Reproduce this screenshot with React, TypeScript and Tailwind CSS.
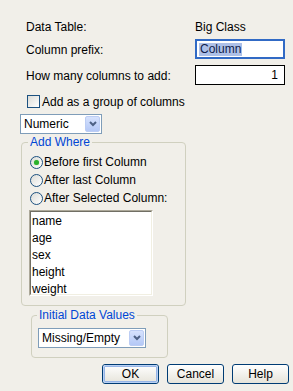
import React from "react";

function Chevron() {
  return (
    <svg width="8" height="6" viewBox="0 0 8 6">
      <path d="M1 1 L4 4 L7 1" fill="none" stroke="#4d6185" strokeWidth="2" />
    </svg>
  );
}

function Dropdown({ label, w }: { label: string; w: string }) {
  return (
    <div className={`${w} h-[20px] bg-white border border-[#7f9db9] flex items-center justify-between pl-[3px] pr-px`}>
      <span className="leading-[14px]">{label}</span>
      <div className="w-[15px] h-[16px] rounded-[2px] bg-gradient-to-b from-[#d6e2fd] to-[#b4c8f6] border border-[#bccdf4] flex items-center justify-center">
        <Chevron />
      </div>
    </div>
  );
}

function Radio({ checked, label }: { checked?: boolean; label: string }) {
  return (
    <div className="flex items-center h-[18px]">
      <div className="w-[13px] h-[13px] rounded-full border border-[#1c5180] bg-gradient-to-br from-[#dcdcd7] to-white flex items-center justify-center">
        {checked && <div className="w-[5px] h-[5px] rounded-full bg-[#2bb12b] shadow-[0_0_1px_#6fd66f]" />}
      </div>
      <span className="ml-px leading-[14px]">{label}</span>
    </div>
  );
}

function Btn({ label, def }: { label: string; def?: boolean }) {
  return (
    <div className="w-[57px] h-[20px] rounded-[3px] border border-[#003c74] bg-gradient-to-b from-white to-[#e6e4da] flex items-center justify-center">
      <div className={`w-full h-full rounded-[2px] flex items-center justify-center ${def ? "border border-[#b8d0f3] shadow-[inset_0_0_0_1px_#96b4e6]" : ""}`}>
        <span className="leading-[14px]">{label}</span>
      </div>
    </div>
  );
}

export default function App() {
  return (
    <div
      className="w-[293px] h-[391px] bg-[#f1efe9] text-black text-[12px] overflow-hidden"
      style={{ fontFamily: '"Liberation Sans", Arial, sans-serif' }}
    >
      <div className="pt-[20px] pl-[26px] flex leading-[14px]">
        <span className="w-[169px]">Data Table:</span>
        <span>Big Class</span>
      </div>
      <div className="mt-[5px] pl-[26px] flex items-center">
        <span className="w-[169px] leading-[14px] pt-[2px]">Column prefix:</span>
        <div className="w-[90px] h-[20px] border-2 border-[#316ac5] bg-white flex items-center pl-[2px]">
          <span className="bg-[#adc0e8] leading-[13px] px-px text-[#10204a]">Column</span>
        </div>
      </div>
      <div className="mt-[6px] pl-[26px] flex items-center">
        <span className="w-[169px] leading-[14px] pt-[2px]">How many columns to add:</span>
        <div className="w-[90px] h-[20px] border border-black bg-white flex items-center justify-end pr-[6px]">
          <span className="leading-[14px]">1</span>
        </div>
      </div>
      <div className="mt-[9px] pl-[27px] flex items-center">
        <div className="w-[13px] h-[13px] border border-[#1c5180] bg-gradient-to-br from-[#dcdcd7] to-white" />
        <span className="ml-[2px] leading-[14px] pt-[1px]">Add as a group of columns</span>
      </div>
      <div className="mt-[5px] pl-[20px]">
        <Dropdown label="Numeric" w="w-[82px]" />
      </div>
      <div className="mt-[8px] ml-[21px] w-[165px] h-[164px] border border-[#d0d0bf] rounded-[4px] relative">
        <span className="absolute -top-[8px] left-[6px] px-[2px] bg-[#f1efe9] text-[#0046d5] leading-[14px]">Add Where</span>
        <div className="pt-[10px] pl-[8px]">
          <Radio checked label="Before first Column" />
          <Radio label="After last Column" />
          <Radio label="After Selected Column:" />
          <div className="mt-[3px] -ml-px w-[124px] h-[86px] border border-t-[#aca899] border-l-[#aca899] border-r-white border-b-white">
            <div className="w-full h-full border border-t-[#716f64] border-l-[#716f64] border-r-[#f1efe2] border-b-[#f1efe2] bg-white pl-px leading-[17px] pt-[1px]">
              <div>name</div>
              <div>age</div>
              <div>sex</div>
              <div>height</div>
              <div>weight</div>
            </div>
          </div>
        </div>
      </div>
      <div className="mt-[9px] ml-[31px] w-[137px] h-[43px] border border-[#d0d0bf] rounded-[4px] relative">
        <span className="absolute -top-[8px] left-[5px] px-[2px] bg-[#f1efe9] text-[#0046d5] leading-[14px]">Initial Data Values</span>
        <div className="pt-[12px] pl-[6px]">
          <Dropdown label="Missing/Empty" w="w-[108px]" />
        </div>
      </div>
      <div className="mt-[6px] flex gap-[8px] pl-[102px]">
        <Btn label="OK" def />
        <Btn label="Cancel" />
        <Btn label="Help" />
      </div>
    </div>
  );
}
